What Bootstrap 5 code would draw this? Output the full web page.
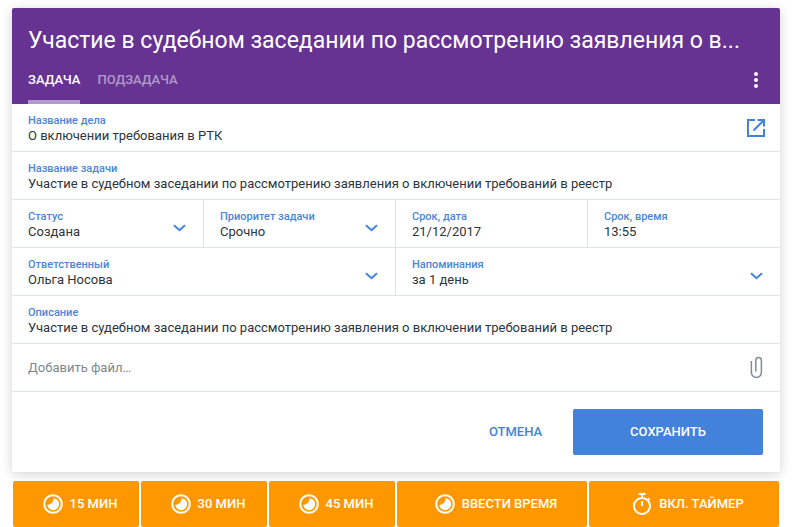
<!DOCTYPE html>
<html lang="ru">
<head>
<meta charset="utf-8">
<title>Задача</title>
<link href="https://cdn.jsdelivr.net/npm/bootstrap@5.3.0/dist/css/bootstrap.min.css" rel="stylesheet">
<style>
html,body{height:527px;overflow:hidden;background:#fff}
body{font-family:Roboto,"Noto Sans",sans-serif;color:#2b3440;padding:8px 12px 0}
.task-card{width:768px;height:464px;background:#fff;box-shadow:0 2px 12px rgba(0,0,0,.18);border-radius:2px}
.task-head{height:96px;background:#663393;color:#fff;padding:17px 16px 0;border-radius:2px 2px 0 0}
.task-title{font-size:23px;line-height:32px;font-weight:400;margin:0;white-space:nowrap;overflow:hidden;letter-spacing:0}
.task-tabs{margin-top:7px;height:40px}
.task-tab{font-size:13px;font-weight:500;line-height:16px;padding:8px 0 0;height:40px;color:rgba(255,255,255,.5);margin-right:17px;border-bottom:4px solid transparent}
.task-tab.on{color:#fff;border-bottom-color:#b29ac9}
.task-dots{margin:7px -4px 0 0}
.task-row{height:48px;border-bottom:1px solid #dee3e8}
.task-cell{padding:10px 16px 0;height:47px;min-width:0;border-right:1px solid #dee3e8}
.task-cell:last-child{border-right:0}
.w-one{width:192px}.w-two{width:384px}
.task-lbl{font-size:11px;line-height:14px;font-weight:500;color:#4a86dc}
.task-val{font-size:13px;line-height:16px;color:#2b3440;white-space:nowrap}
.task-add{font-size:13px;color:#7d8792}
.task-chev{margin:14px 1px 0 0}
.task-link{margin:5px -1px 0 0}
.task-foot{height:79px;padding:17px 17px 0 0}
.btn-cancel{font-size:13px;font-weight:500;color:#4382da;width:115px;background:none;border:0;padding:0;height:46px}
.btn-save{width:190px;height:46px;background:#4382da;color:#fff;font-size:13px;font-weight:500;border:0;border-radius:2px;padding:0}
.time-bar{margin:9px 0 0 1px;gap:2px}
.time-btn{height:46px;background:#ff9800;color:#fff;font-size:13px;font-weight:500;border:0;border-radius:2px;gap:7px;padding:0 0 0 8px}
.w-s{width:126px}.w-l{width:190px}
svg{display:block;flex:none}
</style>
</head>
<body>
<div class="task-card">
  <div class="task-head">
    <h1 class="task-title">Участие в судебном заседании по рассмотрению заявления о в...</h1>
    <div class="task-tabs d-flex align-items-start">
      <div class="task-tab on">ЗАДАЧА</div>
      <div class="task-tab">ПОДЗАДАЧА</div>
      <svg class="ms-auto task-dots" width="24" height="18" viewBox="0 0 24 18" fill="#fff"><circle cx="12" cy="3" r="2"/><circle cx="12" cy="9" r="2"/><circle cx="12" cy="15" r="2"/></svg>
    </div>
  </div>
  <div class="task-row d-flex">
    <div class="task-cell flex-grow-1 d-flex justify-content-between">
      <div><div class="task-lbl">Название дела</div><div class="task-val">О включении требования в РТК</div></div>
      <svg class="task-link" width="18" height="18" viewBox="0 0 18 18" fill="none" stroke="#4382da" stroke-width="2"><path d="M8 1H1v16h16v-7"/><path d="M6.500 11.500 16.500 1.500M10.500 1H17v6.500"/></svg>
    </div>
  </div>
  <div class="task-row d-flex">
    <div class="task-cell flex-grow-1"><div class="task-lbl">Название задачи</div><div class="task-val">Участие в судебном заседании по рассмотрению заявления о включении требований в реестр</div></div>
  </div>
  <div class="task-row d-flex">
    <div class="task-cell w-one d-flex justify-content-between"><div><div class="task-lbl">Статус</div><div class="task-val">Создана</div></div><svg class="task-chev" width="13" height="8" viewBox="0 0 13 8" fill="none" stroke="#4382da" stroke-width="2"><path d="m1 1.200 5.500 5 5.500-5"/></svg></div>
    <div class="task-cell w-one d-flex justify-content-between"><div><div class="task-lbl">Приоритет задачи</div><div class="task-val">Срочно</div></div><svg class="task-chev" width="13" height="8" viewBox="0 0 13 8" fill="none" stroke="#4382da" stroke-width="2"><path d="m1 1.200 5.500 5 5.500-5"/></svg></div>
    <div class="task-cell w-one"><div class="task-lbl">Срок, дата</div><div class="task-val">21/12/2017</div></div>
    <div class="task-cell w-one"><div class="task-lbl">Срок, время</div><div class="task-val">13:55</div></div>
  </div>
  <div class="task-row d-flex">
    <div class="task-cell w-two d-flex justify-content-between"><div><div class="task-lbl">Ответственный</div><div class="task-val">Ольга Носова</div></div><svg class="task-chev" width="13" height="8" viewBox="0 0 13 8" fill="none" stroke="#4382da" stroke-width="2"><path d="m1 1.200 5.500 5 5.500-5"/></svg></div>
    <div class="task-cell w-two d-flex justify-content-between"><div><div class="task-lbl">Напоминания</div><div class="task-val">за 1 день</div></div><svg class="task-chev" width="13" height="8" viewBox="0 0 13 8" fill="none" stroke="#4382da" stroke-width="2"><path d="m1 1.200 5.500 5 5.500-5"/></svg></div>
  </div>
  <div class="task-row d-flex">
    <div class="task-cell flex-grow-1"><div class="task-lbl">Описание</div><div class="task-val">Участие в судебном заседании по рассмотрению заявления о включении требований в реестр</div></div>
  </div>
  <div class="task-row d-flex align-items-center justify-content-between" style="padding:0 16px">
    <div class="task-add">Добавить файл…</div>
    <svg width="14" height="23" viewBox="0 0 14 23" fill="none" stroke="#7d8a98" stroke-width="1.500"><path d="M5.800 15.500V4.200a2.800 2.800 0 0 1 5.600 0V16.500a5 5 0 0 1-10 0V5"/></svg>
  </div>
  <div class="task-foot d-flex justify-content-end">
    <button class="btn-cancel" type="button">ОТМЕНА</button>
    <button class="btn-save" type="button">СОХРАНИТЬ</button>
  </div>
</div>
<div class="time-bar d-flex">
  <button class="time-btn w-s d-flex align-items-center justify-content-center" type="button"><svg width="20" height="20" viewBox="0 0 20 20"><circle cx="10" cy="10" r="8.800" fill="none" stroke="#fff" stroke-width="2"/><path d="M10.500 4.200A6 6 0 1 1 4.200 10.800C8 10.800 10.500 8 10.500 4.200Z" fill="#fff"/></svg>15 МИН</button>
  <button class="time-btn w-s d-flex align-items-center justify-content-center" type="button"><svg width="20" height="20" viewBox="0 0 20 20"><circle cx="10" cy="10" r="8.800" fill="none" stroke="#fff" stroke-width="2"/><path d="M10.500 4.200A6 6 0 1 1 4.200 10.800C8 10.800 10.500 8 10.500 4.200Z" fill="#fff"/></svg>30 МИН</button>
  <button class="time-btn w-s d-flex align-items-center justify-content-center" type="button"><svg width="20" height="20" viewBox="0 0 20 20"><circle cx="10" cy="10" r="8.800" fill="none" stroke="#fff" stroke-width="2"/><path d="M10.500 4.200A6 6 0 1 1 4.200 10.800C8 10.800 10.500 8 10.500 4.200Z" fill="#fff"/></svg>45 МИН</button>
  <button class="time-btn w-l d-flex align-items-center justify-content-center" type="button"><svg width="20" height="20" viewBox="0 0 20 20"><circle cx="10" cy="10" r="8.800" fill="none" stroke="#fff" stroke-width="2"/><path d="M10.500 4.200A6 6 0 1 1 4.200 10.800C8 10.800 10.500 8 10.500 4.200Z" fill="#fff"/></svg>ВВЕСТИ ВРЕМЯ</button>
  <button class="time-btn w-l d-flex align-items-center justify-content-center" type="button"><svg width="20" height="23" viewBox="0 0 20 23" fill="none" stroke="#fff" stroke-width="2"><path d="M6.500 1h7M10 1v3"/><circle cx="10" cy="13" r="8"/><path d="M10 13V8M16 5.500l1.500 1.500"/></svg>ВКЛ. ТАЙМЕР</button>
</div>
<script src="https://cdn.jsdelivr.net/npm/bootstrap@5.3.0/dist/js/bootstrap.bundle.min.js"></script>
</body>
</html>
